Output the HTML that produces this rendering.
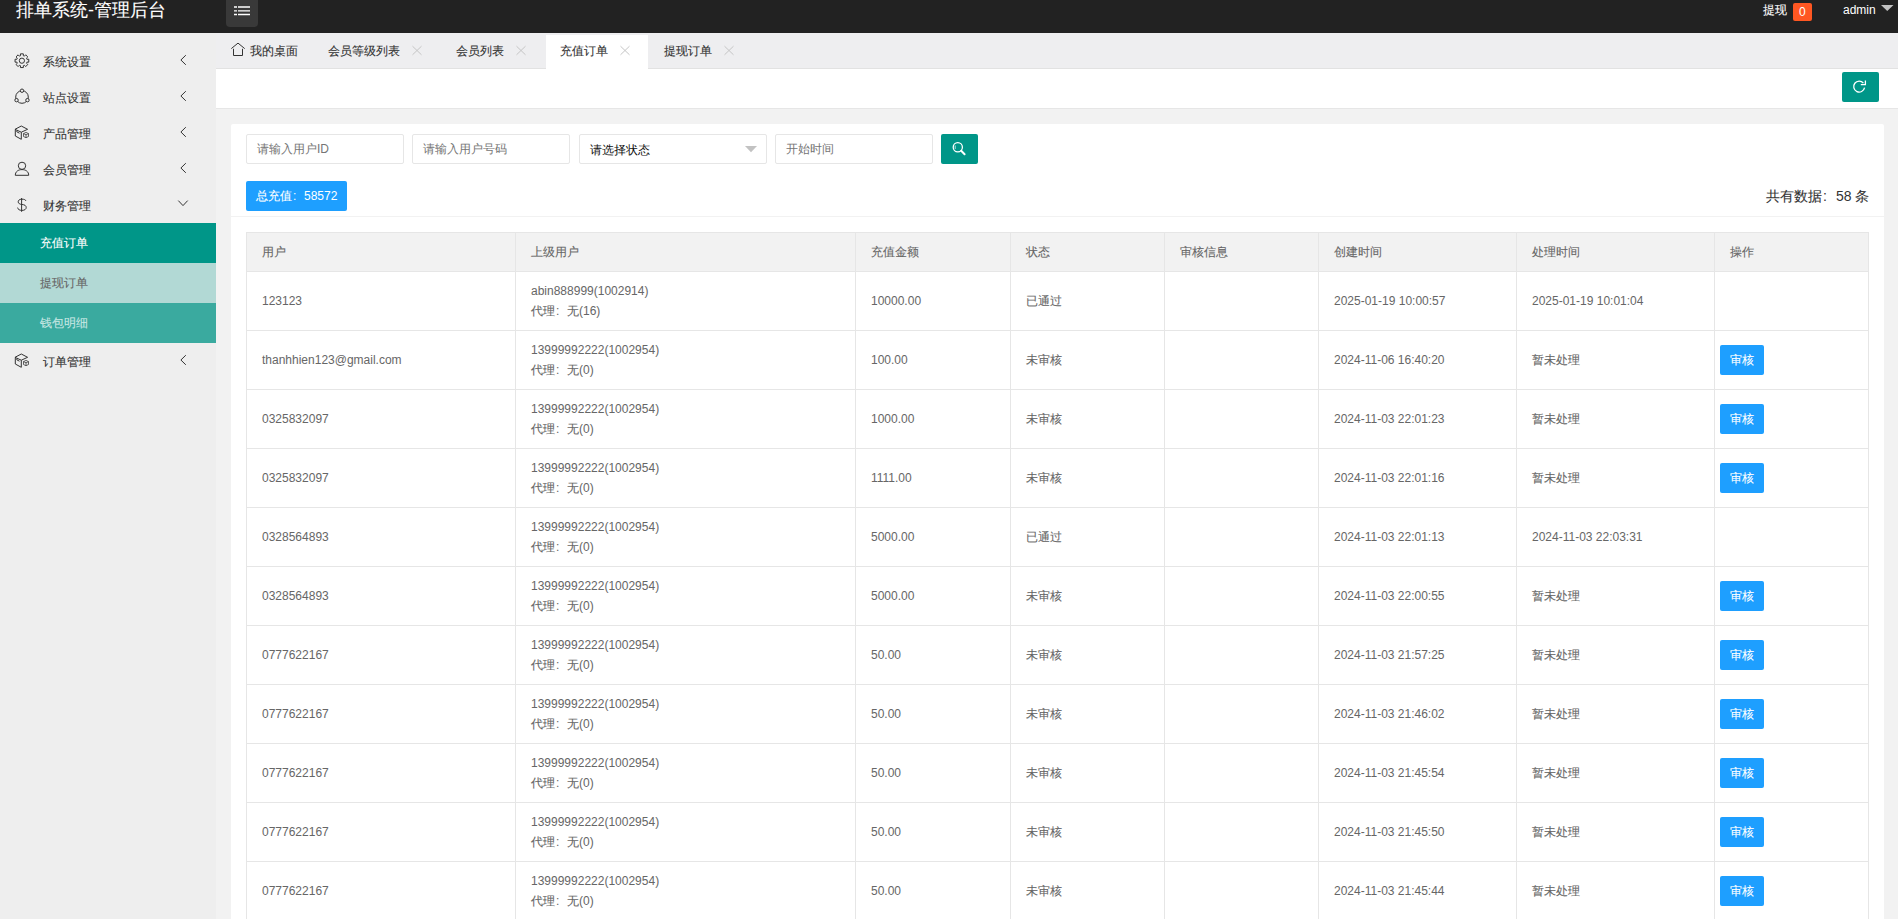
<!DOCTYPE html>
<html><head><meta charset="utf-8"><style>
*{margin:0;padding:0;box-sizing:border-box}
html,body{width:1898px;height:919px;overflow:hidden;background:#f2f2f2;font-family:"Liberation Sans",sans-serif;font-size:12px;color:#333}
.a{position:absolute;white-space:nowrap;line-height:14px}
.b{position:absolute}
.t{color:#333}
.ct{color:#666}
.cl{display:inline-block;width:1em;padding-left:1px}
.k{font-style:normal;-webkit-text-stroke:0.1px currentColor}
.np .k{-webkit-text-stroke:0}
</style></head><body>
<div class="b" style="left:0px;top:0px;width:1898px;height:33px;background:#222;"></div>
<span class="a" style="left:16px;top:-1px;font-size:18px;line-height:22px;color:#fff"><i class="k">排单系统</i>-<i class="k">管理后台</i></span>
<div class="b" style="left:226px;top:0px;width:32px;height:27px;background:#393939;border-radius:0 0 4px 4px"></div>
<span class="a" style="left:1763px;top:3px;color:#fff;"><i class="k">提现</i></span>
<div class="b" style="left:1793px;top:3px;width:19px;height:18px;background:#ff5722;border-radius:2px"></div>
<span class="a" style="left:1799px;top:5px;color:#fff;">0</span>
<span class="a" style="left:1843px;top:3px;color:#fff;">admin</span>
<div class="b" style="left:0px;top:33px;width:216px;height:886px;background:#eee;"></div>
<span class="a" style="left:43px;top:55px;color:#333;"><i class="k">系统设置</i></span>
<span class="a" style="left:43px;top:91px;color:#333;"><i class="k">站点设置</i></span>
<span class="a" style="left:43px;top:127px;color:#333;"><i class="k">产品管理</i></span>
<span class="a" style="left:43px;top:163px;color:#333;"><i class="k">会员管理</i></span>
<span class="a" style="left:43px;top:199px;color:#333;"><i class="k">财务管理</i></span>
<span class="a" style="left:43px;top:355px;color:#333;"><i class="k">订单管理</i></span>
<div class="b" style="left:0px;top:223px;width:216px;height:40px;background:#009688;"></div>
<span class="a" style="left:40px;top:236px;color:#fff;"><i class="k">充值订单</i></span>
<div class="b" style="left:0px;top:263px;width:216px;height:40px;background:#b2d9d5;"></div>
<span class="a" style="left:40px;top:276px;color:#666;"><i class="k">提现订单</i></span>
<div class="b" style="left:0px;top:303px;width:216px;height:40px;background:#3aaa9f;"></div>
<span class="a" style="left:40px;top:316px;color:#c8e7e3;"><i class="k">钱包明细</i></span>
<div class="b" style="left:216px;top:33px;width:1682px;height:36px;background:#eeeef0;"></div>
<div class="b" style="left:216px;top:68px;width:1682px;height:1px;background:#e2e2e2;"></div>
<div class="b" style="left:546px;top:35px;width:102px;height:34px;background:#fff;"></div>
<span class="a" style="left:250px;top:44px;color:#333;"><i class="k">我的桌面</i></span>
<span class="a" style="left:328px;top:44px;color:#333;"><i class="k">会员等级列表</i></span>
<span class="a" style="left:456px;top:44px;color:#333;"><i class="k">会员列表</i></span>
<span class="a" style="left:560px;top:44px;color:#333;"><i class="k">充值订单</i></span>
<span class="a" style="left:664px;top:44px;color:#333;"><i class="k">提现订单</i></span>
<div class="b" style="left:216px;top:69px;width:1682px;height:39px;background:#fff;"></div>
<div class="b" style="left:216px;top:108px;width:1682px;height:1px;background:#e6e6e6;"></div>
<div class="b" style="left:1842px;top:72px;width:37px;height:30px;background:#009688;border-radius:2px"></div>
<div class="b" style="left:231px;top:124px;width:1653px;height:800px;background:#fff;border-radius:2px"></div>
<div class="b" style="left:246px;top:134px;width:158px;height:30px;background:#fff;border:1px solid #e6e6e6;border-radius:2px"></div>
<span class="a np" style="left:257px;top:142px;color:#757575"><i class="k">请输入用户</i>ID</span>
<div class="b" style="left:412px;top:134px;width:158px;height:30px;background:#fff;border:1px solid #e6e6e6;border-radius:2px"></div>
<span class="a np" style="left:423px;top:142px;color:#757575"><i class="k">请输入用户号码</i></span>
<div class="b" style="left:775px;top:134px;width:158px;height:30px;background:#fff;border:1px solid #e6e6e6;border-radius:2px"></div>
<span class="a np" style="left:786px;top:142px;color:#757575"><i class="k">开始时间</i></span>
<div class="b" style="left:579px;top:134px;width:188px;height:30px;background:#fff;border:1px solid #e6e6e6;border-radius:2px"></div>
<span class="a np" style="left:590px;top:143px;color:#111"><i class="k">请选择状态</i></span>
<div class="b" style="left:941px;top:134px;width:37px;height:30px;background:#009688;border-radius:2px"></div>
<div class="b" style="left:246px;top:181px;width:101px;height:30px;background:#1e9fff;border-radius:2px"></div>
<span class="a" style="left:256px;top:189px;color:#fff;"><i class="k">总充值</i><span class="cl">:</span>58572</span>
<span class="a" style="left:1766px;top:188px;font-size:14px;line-height:16px;color:#333"><i class="k">共有数据</i><span class="cl">:</span>58 <i class="k">条</i></span>
<div class="b" style="left:231px;top:216px;width:1653px;height:1px;background:#f2f2f2;"></div>
<div class="b" style="left:246px;top:232px;width:1623px;height:40px;background:#f2f2f2;"></div>
<div class="b" style="left:246px;top:232px;width:1623px;height:1px;background:#e6e6e6;"></div>
<div class="b" style="left:246px;top:271px;width:1623px;height:1px;background:#e6e6e6;"></div>
<div class="b" style="left:246px;top:330px;width:1623px;height:1px;background:#e6e6e6;"></div>
<div class="b" style="left:246px;top:389px;width:1623px;height:1px;background:#e6e6e6;"></div>
<div class="b" style="left:246px;top:448px;width:1623px;height:1px;background:#e6e6e6;"></div>
<div class="b" style="left:246px;top:507px;width:1623px;height:1px;background:#e6e6e6;"></div>
<div class="b" style="left:246px;top:566px;width:1623px;height:1px;background:#e6e6e6;"></div>
<div class="b" style="left:246px;top:625px;width:1623px;height:1px;background:#e6e6e6;"></div>
<div class="b" style="left:246px;top:684px;width:1623px;height:1px;background:#e6e6e6;"></div>
<div class="b" style="left:246px;top:743px;width:1623px;height:1px;background:#e6e6e6;"></div>
<div class="b" style="left:246px;top:802px;width:1623px;height:1px;background:#e6e6e6;"></div>
<div class="b" style="left:246px;top:861px;width:1623px;height:1px;background:#e6e6e6;"></div>
<div class="b" style="left:246px;top:232px;width:1px;height:700px;background:#e6e6e6;"></div>
<div class="b" style="left:515px;top:232px;width:1px;height:700px;background:#e6e6e6;"></div>
<div class="b" style="left:855px;top:232px;width:1px;height:700px;background:#e6e6e6;"></div>
<div class="b" style="left:1010px;top:232px;width:1px;height:700px;background:#e6e6e6;"></div>
<div class="b" style="left:1164px;top:232px;width:1px;height:700px;background:#e6e6e6;"></div>
<div class="b" style="left:1318px;top:232px;width:1px;height:700px;background:#e6e6e6;"></div>
<div class="b" style="left:1516px;top:232px;width:1px;height:700px;background:#e6e6e6;"></div>
<div class="b" style="left:1714px;top:232px;width:1px;height:700px;background:#e6e6e6;"></div>
<div class="b" style="left:1868px;top:232px;width:1px;height:700px;background:#e6e6e6;"></div>
<span class="a" style="left:262px;top:245px;color:#666;"><i class="k">用户</i></span>
<span class="a" style="left:531px;top:245px;color:#666;"><i class="k">上级用户</i></span>
<span class="a" style="left:871px;top:245px;color:#666;"><i class="k">充值金额</i></span>
<span class="a" style="left:1026px;top:245px;color:#666;"><i class="k">状态</i></span>
<span class="a" style="left:1180px;top:245px;color:#666;"><i class="k">审核信息</i></span>
<span class="a" style="left:1334px;top:245px;color:#666;"><i class="k">创建时间</i></span>
<span class="a" style="left:1532px;top:245px;color:#666;"><i class="k">处理时间</i></span>
<span class="a" style="left:1730px;top:245px;color:#666;"><i class="k">操作</i></span>
<span class="a" style="left:262px;top:294px;color:#666;">123123</span>
<span class="a" style="left:531px;top:284px;color:#666;">abin888999(1002914)</span>
<span class="a" style="left:531px;top:304px;color:#666;"><i class="k">代理</i><span class="cl">:</span><i class="k">无</i>(16)</span>
<span class="a" style="left:871px;top:294px;color:#666;">10000.00</span>
<span class="a" style="left:1026px;top:294px;color:#666;"><i class="k">已通过</i></span>
<span class="a" style="left:1334px;top:294px;color:#666;">2025-01-19 10:00:57</span>
<span class="a" style="left:1532px;top:294px;color:#666;">2025-01-19 10:01:04</span>
<span class="a" style="left:262px;top:353px;color:#666;">thanhhien123@gmail.com</span>
<span class="a" style="left:531px;top:343px;color:#666;">13999992222(1002954)</span>
<span class="a" style="left:531px;top:363px;color:#666;"><i class="k">代理</i><span class="cl">:</span><i class="k">无</i>(0)</span>
<span class="a" style="left:871px;top:353px;color:#666;">100.00</span>
<span class="a" style="left:1026px;top:353px;color:#666;"><i class="k">未审核</i></span>
<span class="a" style="left:1334px;top:353px;color:#666;">2024-11-06 16:40:20</span>
<span class="a" style="left:1532px;top:353px;color:#666;"><i class="k">暂未处理</i></span>
<div class="b" style="left:1720px;top:345px;width:44px;height:30px;background:#1e9fff;border-radius:2px"></div>
<span class="a" style="left:1730px;top:353px;color:#fff;"><i class="k">审核</i></span>
<span class="a" style="left:262px;top:412px;color:#666;">0325832097</span>
<span class="a" style="left:531px;top:402px;color:#666;">13999992222(1002954)</span>
<span class="a" style="left:531px;top:422px;color:#666;"><i class="k">代理</i><span class="cl">:</span><i class="k">无</i>(0)</span>
<span class="a" style="left:871px;top:412px;color:#666;">1000.00</span>
<span class="a" style="left:1026px;top:412px;color:#666;"><i class="k">未审核</i></span>
<span class="a" style="left:1334px;top:412px;color:#666;">2024-11-03 22:01:23</span>
<span class="a" style="left:1532px;top:412px;color:#666;"><i class="k">暂未处理</i></span>
<div class="b" style="left:1720px;top:404px;width:44px;height:30px;background:#1e9fff;border-radius:2px"></div>
<span class="a" style="left:1730px;top:412px;color:#fff;"><i class="k">审核</i></span>
<span class="a" style="left:262px;top:471px;color:#666;">0325832097</span>
<span class="a" style="left:531px;top:461px;color:#666;">13999992222(1002954)</span>
<span class="a" style="left:531px;top:481px;color:#666;"><i class="k">代理</i><span class="cl">:</span><i class="k">无</i>(0)</span>
<span class="a" style="left:871px;top:471px;color:#666;">1111.00</span>
<span class="a" style="left:1026px;top:471px;color:#666;"><i class="k">未审核</i></span>
<span class="a" style="left:1334px;top:471px;color:#666;">2024-11-03 22:01:16</span>
<span class="a" style="left:1532px;top:471px;color:#666;"><i class="k">暂未处理</i></span>
<div class="b" style="left:1720px;top:463px;width:44px;height:30px;background:#1e9fff;border-radius:2px"></div>
<span class="a" style="left:1730px;top:471px;color:#fff;"><i class="k">审核</i></span>
<span class="a" style="left:262px;top:530px;color:#666;">0328564893</span>
<span class="a" style="left:531px;top:520px;color:#666;">13999992222(1002954)</span>
<span class="a" style="left:531px;top:540px;color:#666;"><i class="k">代理</i><span class="cl">:</span><i class="k">无</i>(0)</span>
<span class="a" style="left:871px;top:530px;color:#666;">5000.00</span>
<span class="a" style="left:1026px;top:530px;color:#666;"><i class="k">已通过</i></span>
<span class="a" style="left:1334px;top:530px;color:#666;">2024-11-03 22:01:13</span>
<span class="a" style="left:1532px;top:530px;color:#666;">2024-11-03 22:03:31</span>
<span class="a" style="left:262px;top:589px;color:#666;">0328564893</span>
<span class="a" style="left:531px;top:579px;color:#666;">13999992222(1002954)</span>
<span class="a" style="left:531px;top:599px;color:#666;"><i class="k">代理</i><span class="cl">:</span><i class="k">无</i>(0)</span>
<span class="a" style="left:871px;top:589px;color:#666;">5000.00</span>
<span class="a" style="left:1026px;top:589px;color:#666;"><i class="k">未审核</i></span>
<span class="a" style="left:1334px;top:589px;color:#666;">2024-11-03 22:00:55</span>
<span class="a" style="left:1532px;top:589px;color:#666;"><i class="k">暂未处理</i></span>
<div class="b" style="left:1720px;top:581px;width:44px;height:30px;background:#1e9fff;border-radius:2px"></div>
<span class="a" style="left:1730px;top:589px;color:#fff;"><i class="k">审核</i></span>
<span class="a" style="left:262px;top:648px;color:#666;">0777622167</span>
<span class="a" style="left:531px;top:638px;color:#666;">13999992222(1002954)</span>
<span class="a" style="left:531px;top:658px;color:#666;"><i class="k">代理</i><span class="cl">:</span><i class="k">无</i>(0)</span>
<span class="a" style="left:871px;top:648px;color:#666;">50.00</span>
<span class="a" style="left:1026px;top:648px;color:#666;"><i class="k">未审核</i></span>
<span class="a" style="left:1334px;top:648px;color:#666;">2024-11-03 21:57:25</span>
<span class="a" style="left:1532px;top:648px;color:#666;"><i class="k">暂未处理</i></span>
<div class="b" style="left:1720px;top:640px;width:44px;height:30px;background:#1e9fff;border-radius:2px"></div>
<span class="a" style="left:1730px;top:648px;color:#fff;"><i class="k">审核</i></span>
<span class="a" style="left:262px;top:707px;color:#666;">0777622167</span>
<span class="a" style="left:531px;top:697px;color:#666;">13999992222(1002954)</span>
<span class="a" style="left:531px;top:717px;color:#666;"><i class="k">代理</i><span class="cl">:</span><i class="k">无</i>(0)</span>
<span class="a" style="left:871px;top:707px;color:#666;">50.00</span>
<span class="a" style="left:1026px;top:707px;color:#666;"><i class="k">未审核</i></span>
<span class="a" style="left:1334px;top:707px;color:#666;">2024-11-03 21:46:02</span>
<span class="a" style="left:1532px;top:707px;color:#666;"><i class="k">暂未处理</i></span>
<div class="b" style="left:1720px;top:699px;width:44px;height:30px;background:#1e9fff;border-radius:2px"></div>
<span class="a" style="left:1730px;top:707px;color:#fff;"><i class="k">审核</i></span>
<span class="a" style="left:262px;top:766px;color:#666;">0777622167</span>
<span class="a" style="left:531px;top:756px;color:#666;">13999992222(1002954)</span>
<span class="a" style="left:531px;top:776px;color:#666;"><i class="k">代理</i><span class="cl">:</span><i class="k">无</i>(0)</span>
<span class="a" style="left:871px;top:766px;color:#666;">50.00</span>
<span class="a" style="left:1026px;top:766px;color:#666;"><i class="k">未审核</i></span>
<span class="a" style="left:1334px;top:766px;color:#666;">2024-11-03 21:45:54</span>
<span class="a" style="left:1532px;top:766px;color:#666;"><i class="k">暂未处理</i></span>
<div class="b" style="left:1720px;top:758px;width:44px;height:30px;background:#1e9fff;border-radius:2px"></div>
<span class="a" style="left:1730px;top:766px;color:#fff;"><i class="k">审核</i></span>
<span class="a" style="left:262px;top:825px;color:#666;">0777622167</span>
<span class="a" style="left:531px;top:815px;color:#666;">13999992222(1002954)</span>
<span class="a" style="left:531px;top:835px;color:#666;"><i class="k">代理</i><span class="cl">:</span><i class="k">无</i>(0)</span>
<span class="a" style="left:871px;top:825px;color:#666;">50.00</span>
<span class="a" style="left:1026px;top:825px;color:#666;"><i class="k">未审核</i></span>
<span class="a" style="left:1334px;top:825px;color:#666;">2024-11-03 21:45:50</span>
<span class="a" style="left:1532px;top:825px;color:#666;"><i class="k">暂未处理</i></span>
<div class="b" style="left:1720px;top:817px;width:44px;height:30px;background:#1e9fff;border-radius:2px"></div>
<span class="a" style="left:1730px;top:825px;color:#fff;"><i class="k">审核</i></span>
<span class="a" style="left:262px;top:884px;color:#666;">0777622167</span>
<span class="a" style="left:531px;top:874px;color:#666;">13999992222(1002954)</span>
<span class="a" style="left:531px;top:894px;color:#666;"><i class="k">代理</i><span class="cl">:</span><i class="k">无</i>(0)</span>
<span class="a" style="left:871px;top:884px;color:#666;">50.00</span>
<span class="a" style="left:1026px;top:884px;color:#666;"><i class="k">未审核</i></span>
<span class="a" style="left:1334px;top:884px;color:#666;">2024-11-03 21:45:44</span>
<span class="a" style="left:1532px;top:884px;color:#666;"><i class="k">暂未处理</i></span>
<div class="b" style="left:1720px;top:876px;width:44px;height:30px;background:#1e9fff;border-radius:2px"></div>
<span class="a" style="left:1730px;top:884px;color:#fff;"><i class="k">审核</i></span>
<svg style="position:absolute;left:0;top:0;z-index:50" width="1898" height="919" viewBox="0 0 1898 919"><path d="M20.47 55.70L20.44 53.85L23.36 53.85L23.33 55.70A5.2 5.2 0 0 1 24.42 56.15L25.71 54.83L27.77 56.89L26.45 58.18A5.2 5.2 0 0 1 26.90 59.27L28.75 59.24L28.75 62.16L26.90 62.13A5.2 5.2 0 0 1 26.45 63.22L27.77 64.51L25.71 66.57L24.42 65.25A5.2 5.2 0 0 1 23.33 65.70L23.36 67.55L20.44 67.55L20.47 65.70A5.2 5.2 0 0 1 19.38 65.25L18.09 66.57L16.03 64.51L17.35 63.22A5.2 5.2 0 0 1 16.90 62.13L15.05 62.16L15.05 59.24L16.90 59.27A5.2 5.2 0 0 1 17.35 58.18L16.03 56.89L18.09 54.83L19.38 56.15Z" fill="none" stroke="#333" stroke-width="1"/>
<circle cx="21.9" cy="60.7" r="2.6" fill="none" stroke="#333" stroke-width="1"/>
<circle cx="22" cy="97" r="6.3" fill="none" stroke="#333" stroke-width="1"/>
<circle cx="22.00" cy="90.70" r="1.7" fill="#eee" stroke="#333" stroke-width="1"/>
<circle cx="16.54" cy="100.15" r="1.7" fill="#eee" stroke="#333" stroke-width="1"/>
<circle cx="27.46" cy="100.15" r="1.7" fill="#eee" stroke="#333" stroke-width="1"/>
<path d="M15 129.3 L21.3 126 L27.6 129.3 M15 129.3 L21.3 132.2 L27.6 129.3 M15.3 129.3 V136 L21.3 139.3 M21.3 132.2 V139.3 M16.8 130.6 V131.8 L19.5 133.2" fill="none" stroke="#333" stroke-width="1"/><path d="M23.5 133.6 L26 132.4 L28.5 133.6 L26 134.8 Z M23.5 133.6 V136.5 L26 137.7 L28.5 136.5 V133.6 M26 134.8 V137.7" fill="none" stroke="#333" stroke-width="0.75"/>
<path d="M15 357.3 L21.3 354 L27.6 357.3 M15 357.3 L21.3 360.2 L27.6 357.3 M15.3 357.3 V364 L21.3 367.3 M21.3 360.2 V367.3 M16.8 358.6 V359.8 L19.5 361.2" fill="none" stroke="#333" stroke-width="1"/><path d="M23.5 361.6 L26 360.4 L28.5 361.6 L26 362.8 Z M23.5 361.6 V364.5 L26 365.7 L28.5 364.5 V361.6 M26 362.8 V365.7" fill="none" stroke="#333" stroke-width="0.75"/>
<ellipse cx="22" cy="165.8" rx="3.7" ry="3.6" fill="none" stroke="#333" stroke-width="1"/>
<path d="M15.3 175.3 C15.3 171.6 18.2 169.6 22 169.6 C25.8 169.6 28.7 171.6 28.7 175.3 Z" fill="none" stroke="#333" stroke-width="1"/>
<path d="M25.9 200.9 C25.6 199.7 24.2 199.2 22 199.2 C19.2 199.2 18.2 200.4 18.2 201.8 C18.2 203.5 19.8 204.3 22 204.5 C24.5 204.7 26.2 205.5 26.2 207.5 C26.2 209.2 24.6 210.4 22 210.4 C19.4 210.4 17.9 209.4 17.6 207.6 M21.6 198 V211.8" fill="none" stroke="#333" stroke-width="1"/>
<path d="M185.8 55.2 L180.9 60 L185.8 64.8" fill="none" stroke="#333" stroke-width="1"/>
<path d="M185.8 91.2 L180.9 96 L185.8 100.8" fill="none" stroke="#333" stroke-width="1"/>
<path d="M185.8 127.2 L180.9 132 L185.8 136.8" fill="none" stroke="#333" stroke-width="1"/>
<path d="M185.8 163.2 L180.9 168 L185.8 172.8" fill="none" stroke="#333" stroke-width="1"/>
<path d="M185.8 355.2 L180.9 360 L185.8 364.8" fill="none" stroke="#333" stroke-width="1"/>
<path d="M178.3 200.6 L183 205.6 L187.7 200.6" fill="none" stroke="#333" stroke-width="1"/>
<path d="M231.3 48.6 L238 43.1 L244.7 48.6 M233.5 48.8 V55.5 H242.5 V48.8" fill="none" stroke="#333" stroke-width="1"/>
<path d="M234 7h3M238 7H250M234 10.8h3M238 10.8H250M234 14.5h3M238 14.5H250" stroke="#fff" stroke-width="1.3"/>
<path d="M412.5 46.2 L421.5 54.8 M421.5 46.2 L412.5 54.8" stroke="#c6c6c6" stroke-width="1" fill="none"/>
<path d="M516.5 46.2 L525.5 54.8 M525.5 46.2 L516.5 54.8" stroke="#c6c6c6" stroke-width="1" fill="none"/>
<path d="M620.5 46.2 L629.5 54.8 M629.5 46.2 L620.5 54.8" stroke="#c6c6c6" stroke-width="1" fill="none"/>
<path d="M724.5 46.2 L733.5 54.8 M733.5 46.2 L724.5 54.8" stroke="#c6c6c6" stroke-width="1" fill="none"/>
<path d="M1864.58 87.74 A5.5 5.5 0 1 1 1863.41 83.06" fill="none" stroke="#fff" stroke-width="1.3"/>
<path d="M1860.8 84.6 H1865.4 V80.6" fill="none" stroke="#fff" stroke-width="1.3"/>
<circle cx="957.8" cy="147.3" r="4.6" fill="none" stroke="#fff" stroke-width="1.3"/>
<path d="M961.2 150.8 L964.6 154.2" stroke="#fff" stroke-width="2" stroke-linecap="round"/>
<path d="M955.2 145.5 V149" stroke="#fff" stroke-width="0.7"/>
<path d="M1881 5 H1893.5 L1887.25 11 Z" fill="#c2c2c2"/>
<path d="M745 146 H757 L751 152.3 Z" fill="#c2c2c2"/></svg>
</body></html>
